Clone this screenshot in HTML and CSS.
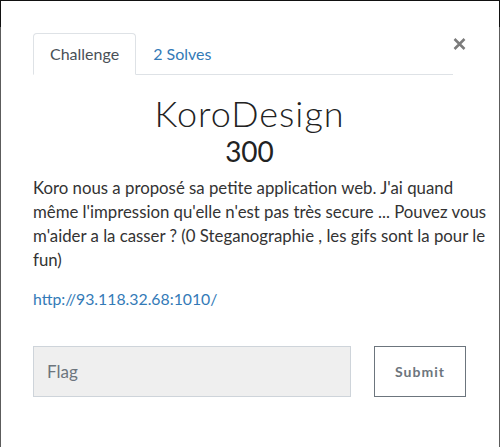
FILE: index.html
```html
<!DOCTYPE html>
<html>
<head>
<meta charset="utf-8">
<link rel="stylesheet" href="styles.css">
</head>
<body>
<div class="modal">
  <div class="header">
    <ul class="tabs">
      <li class="tab active">Challenge</li>
      <li class="tab link">2 Solves</li>
    </ul>
    <button class="close" aria-label="Close">
      <svg width="13" height="12" viewBox="0 0 13 12"><path d="M1.5 1L11.5 11M11.5 1L1.5 11" stroke="#7b7b7b" stroke-width="2.5" stroke-linecap="butt"/></svg>
    </button>
  </div>
  <h2 class="title">KoroDesign</h2>
  <h3 class="value">300</h3>
  <p class="desc">Koro nous a proposé sa petite application web. J'ai quand<br>même l'impression qu'elle n'est pas très secure ... Pouvez vous<br>m'aider a la casser ? (0 Steganographie , les gifs sont la pour le<br>fun)</p>
  <p class="url"><a href="#">http://93.118.32.68:1010/</a></p>
  <form class="submit-row">
    <input class="flag" type="text" placeholder="Flag">
    <button class="submit" type="button">Submit</button>
  </form>
</div>
</body>
</html>
```
FILE: styles.css
```css
html, body {
  margin: 0;
  padding: 0;
  height: 100%;
}
body {
  background: linear-gradient(to bottom, #111 0, #111 27px, #5c5c5c 27px, #5c5c5c 100%);
  font-family: Lato, "Noto Sans", sans-serif;
  overflow: hidden;
}
.modal {
  background: #fff;
  margin: 1px 1px 0 1px;
  height: 446px;
  box-sizing: border-box;
  padding: 32px 33px 0 32px;
}
.header {
  display: flex;
  align-items: flex-start;
}
.tabs {
  list-style: none;
  margin: 0;
  padding: 0;
  display: flex;
  flex: 1;
  border-bottom: 1px solid #dee2e6;
}
.tab {
  font-size: 16px;
  line-height: 20px;
  padding: 10px 16px 10px;
  margin-bottom: -1px;
  border: 1px solid transparent;
  border-radius: 4px 4px 0 0;
}
.tab.active {
  color: #495057;
  background: #fff;
  border-color: #dee2e6 #dee2e6 #fff;
}
.tab.link {
  color: #337ab7;
}
.close {
  background: none;
  border: 0;
  padding: 0;
  margin: 5px 0 0 0;
  width: 13px;
  height: 12px;
  display: flex;
  justify-content: center;
}
.title {
  margin: 17px 0 0;
  text-align: center;
  font-weight: 300;
  font-size: 36px;
  line-height: 42px;
  letter-spacing: 1px;
  color: #222;
}
.value {
  margin: 0;
  text-align: center;
  font-weight: 400;
  font-size: 28px;
  line-height: 34px;
  color: #222;
}
.desc {
  margin: 8px 0 15px;
  font-size: 16.8px;
  line-height: 24px;
  color: #333;
  white-space: nowrap;
}
.url {
  margin: 0;
  font-size: 15.8px;
  line-height: 24px;
}
.url a {
  color: #337ab7;
  text-decoration: none;
}
.submit-row {
  display: flex;
  margin-top: 35px;
  gap: 23px;
}
.flag {
  flex: 0 0 318px;
  height: 51px;
  box-sizing: border-box;
  background: #efefef;
  border: 1px solid #ced4da;
  padding: 0 13px;
  font-family: Lato, sans-serif;
  font-size: 17px;
  color: #333;
  outline: none;
}
.flag::placeholder {
  color: #6c757d;
}
.submit {
  width: 93px;
  height: 51px;
  box-sizing: border-box;
  background: #fff;
  border: 1px solid #6c757d;
  color: #6c757d;
  font-family: Lato, sans-serif;
  font-weight: 700;
  font-size: 14px;
  letter-spacing: 1px;
}
```
